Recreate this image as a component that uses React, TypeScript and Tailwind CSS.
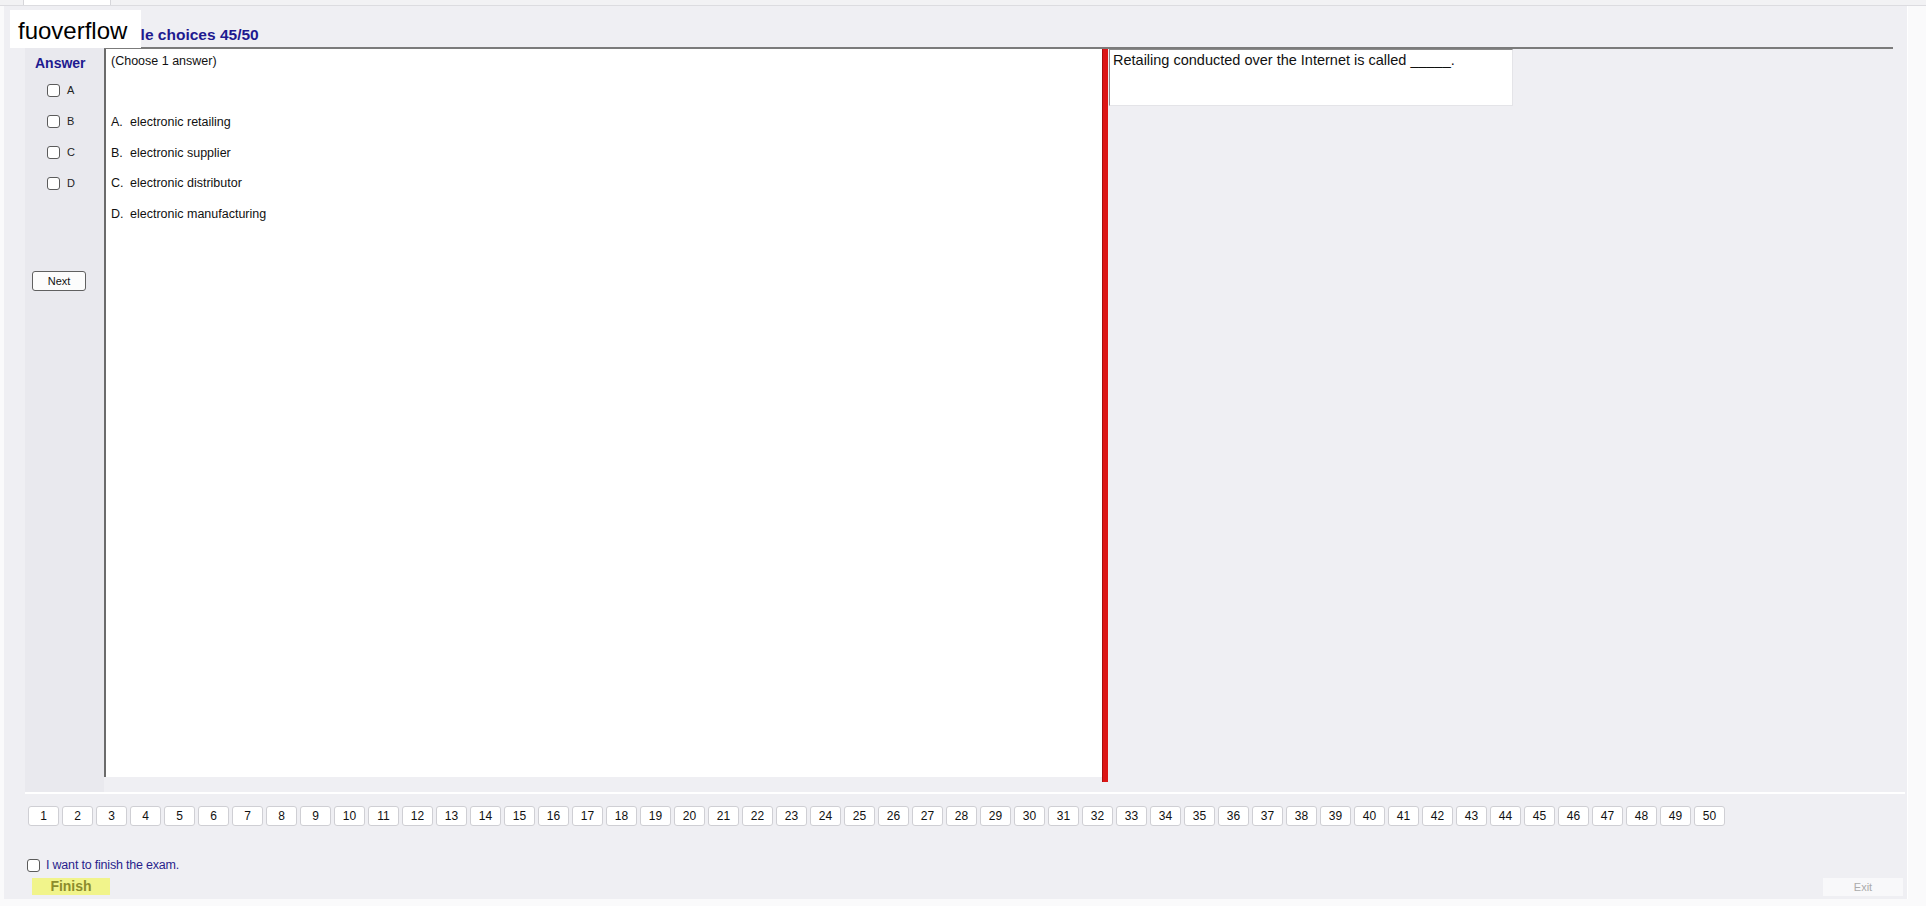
import React from 'react';

const options = [
  { key: 'A', text: 'electronic retailing' },
  { key: 'B', text: 'electronic supplier' },
  { key: 'C', text: 'electronic distributor' },
  { key: 'D', text: 'electronic manufacturing' },
];

const questionNumbers = Array.from({ length: 50 }, (_, i) => i + 1);

function Box() {
  return (
    <span className="inline-block w-[13px] h-[13px] border border-[#5b5b5b] rounded-[3px] bg-white shrink-0" />
  );
}

export default function App() {
  return (
    <div className="relative w-[1926px] h-[906px] overflow-hidden bg-[#fafafb] font-['Liberation_Sans',Arial,sans-serif] text-[#111]">
      {/* Tab strip */}
      <div className="h-[6px] flex bg-[#f2f2f4] border-b border-[#dcdce0]">
        <div className="ml-[23px] w-[88px] h-full bg-white border-x border-[#d6d6da]" />
      </div>

      <div className="ml-[4px] w-[1904px] h-[893px] bg-[#efeff3] border-r border-white flex flex-col">
        {/* Header (its start is hidden under the watermark) */}
        <div className="h-[41px] pl-[91px] pt-[17px]">
          <span className="whitespace-nowrap text-[15.5px] leading-[17px] font-bold text-[#1e1a90]">
            Multiple choices 45/50
          </span>
        </div>

        {/* Question group */}
        <div className="ml-[21px] w-[1880px] h-[747px] flex border-b-2 border-double border-white">
          {/* Answer column */}
          <div className="w-[79px] h-[745px] bg-[#e9e9ee] pl-[10px] pt-[8px] flex flex-col">
            <div className="text-[14px] leading-[16px] font-bold text-[#1e1a90]">Answer</div>
            <div className="mt-[4px] flex flex-col">
              {options.map((o) => (
                <div key={o.key} className="h-[31px] pl-[12px] flex items-center gap-[7px]">
                  <Box />
                  <span className="text-[11px] text-[#222]">{o.key}</span>
                </div>
              ))}
            </div>
            <button className="mt-[72px] ml-[-3px] w-[54px] h-[20px] border border-[#606060] rounded-[3px] bg-[#fcfcfc] text-[11px] text-[#111] leading-none">
              Next
            </button>
          </div>

          {/* Question content */}
          <div className="w-[1789px] flex flex-col">
            <div className="h-[730px] flex border-t-2 border-[#7b7b7b]">
              <div className="w-[998px] h-full bg-white border-l-2 border-[#6b6b6b] pl-[5px] pt-[5px] text-[12.5px] leading-[15px]">
                <div>(Choose 1 answer)</div>
                <div className="mt-[46px] flex flex-col">
                  {options.map((o) => (
                    <div key={o.key} className="h-[30.5px] flex">
                      <span className="w-[19px]">{o.key}.</span>
                      <span>{o.text}</span>
                    </div>
                  ))}
                </div>
              </div>
              <div className="w-[6px] h-[733px] bg-[#dc1616] border-l border-[#a80e0e]" />
              <div className="flex-1 pl-px">
                <div className="w-[404px] h-[57px] bg-white border-t border-l border-[#8a8a8a] border-r border-b border-r-[#e4e4e8] border-b-[#e4e4e8] pl-[3px] pt-[2px] text-[14.5px] leading-[17px] text-[#111]">
                  Retailing conducted over the Internet is called _____.
                </div>
              </div>
            </div>
          </div>
        </div>

        {/* Question navigator */}
        <div className="mt-[12px] pl-[24px] flex gap-[3px]">
          {questionNumbers.map((n) => (
            <button
              key={n}
              className="w-[31px] h-[20px] bg-white border border-[#cfcfd4] rounded-[3px] text-[12px] leading-none text-[#111]"
            >
              {n}
            </button>
          ))}
        </div>

        {/* Finish */}
        <div className="mt-[33px] pl-[23px] flex items-center gap-[6px] h-[13px]">
          <Box />
          <span className="text-[12.5px] text-[#2a1f8c] tracking-[-0.2px]">I want to finish the exam.</span>
        </div>
        <div className="mt-[6px] pl-[28px] pr-[4px] flex justify-between items-start">
          <div className="w-[78px] h-[17px] bg-[#f1f48b] flex items-center justify-center text-[14px] font-bold text-[#8c8c2c]">
            Finish
          </div>
          <div className="w-[80px] h-[18px] bg-[#f8f8fa] flex items-center justify-center text-[11px] text-[#ababab]">
            Exit
          </div>
        </div>
      </div>

      {/* Watermark */}
      <div className="absolute left-[10px] top-[10px] w-[131px] h-[38px] bg-white pl-[8px] pt-[3px] text-[24px] leading-[35px] text-black">
        fuoverflow
      </div>
    </div>
  );
}
